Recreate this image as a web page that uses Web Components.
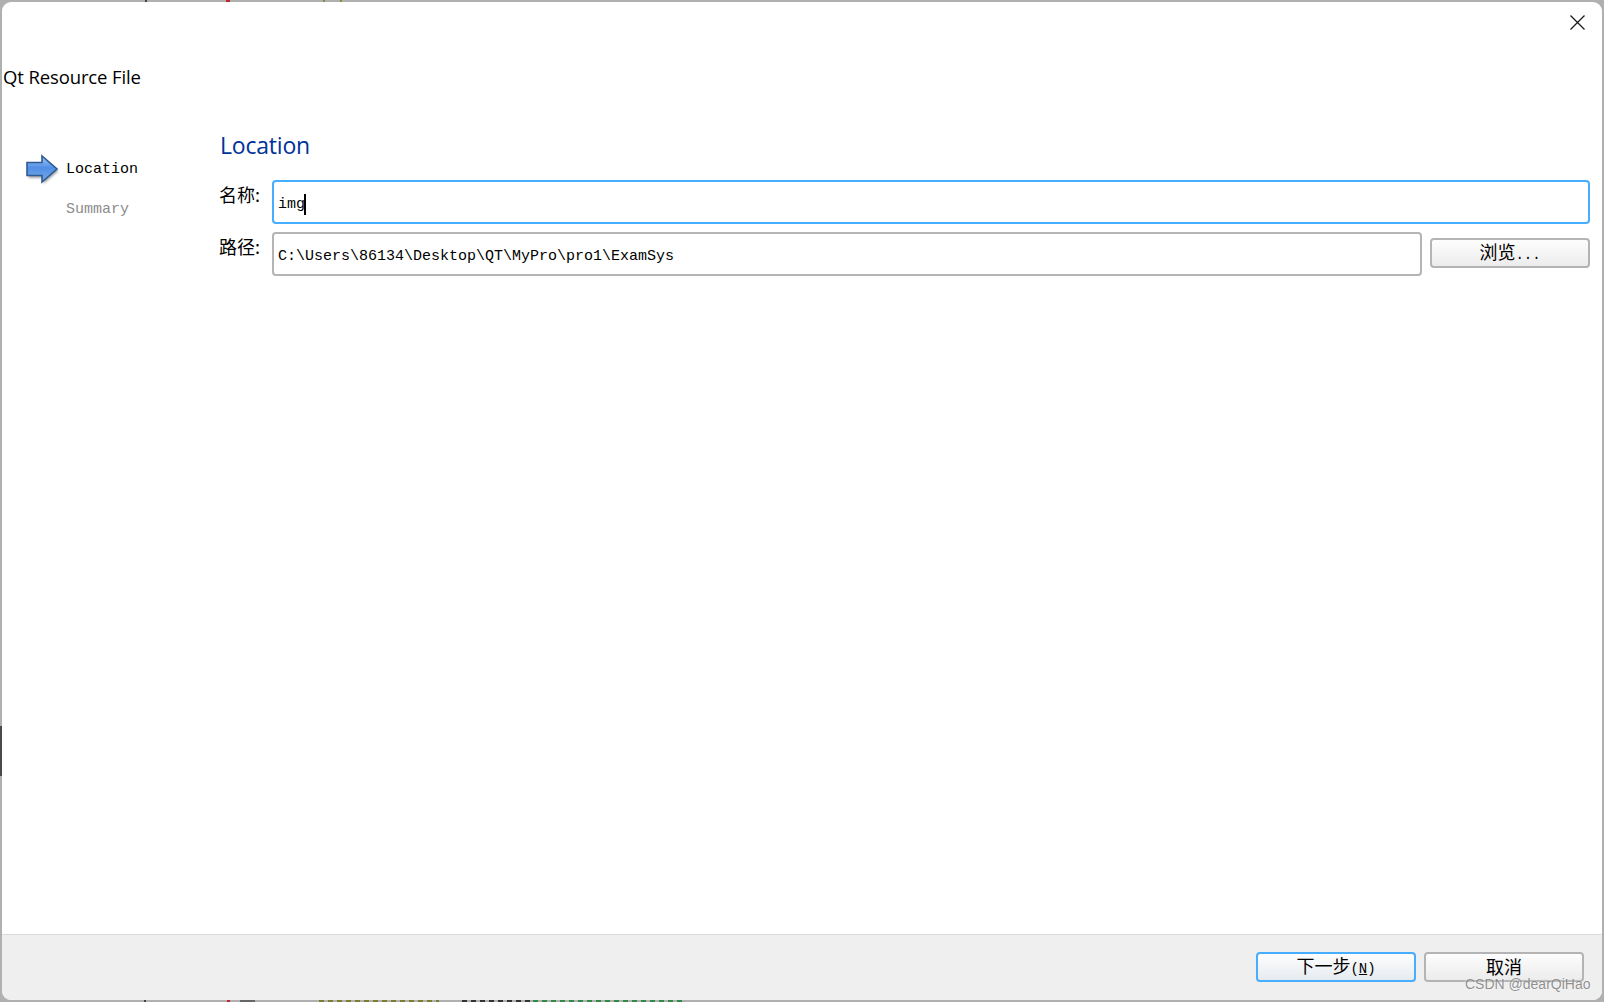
<!DOCTYPE html>
<html>
<head>
<meta charset="utf-8">
<title>Qt Resource File</title>
<style>
	html, body { margin: 0; height: 100%; }
	body { background: #b0b0b0; overflow: hidden; position: relative; }
	.mark { position: absolute; display: block; height: 2px; }
	.dots { background-size: 9px 2px; background-repeat: repeat-x; }
</style>
</head>
<body>
<!-- bits of the window behind the dialog, showing in the 2px frame -->
<i class="mark" style="left:145px;top:0;width:2px;background:#444"></i>
<i class="mark" style="left:226px;top:0;width:4px;background:#c0272d"></i>
<i class="mark" style="left:323px;top:0;width:2px;background:#8b8b3a"></i>
<i class="mark" style="left:340px;top:0;width:2px;background:#8b8b3a"></i>
<i class="mark" style="left:0;top:726px;width:2px;height:50px;background:#4a4a4a"></i>
<i class="mark" style="left:144px;top:1000px;width:2px;background:#444"></i>
<i class="mark" style="left:227px;top:1000px;width:3px;background:#c0272d"></i>
<i class="mark" style="left:240px;top:1000px;width:15px;background:#666"></i>
<i class="mark dots" style="left:319px;top:1000px;width:120px;background-image:linear-gradient(90deg,#7d7d2e 60%,transparent 60%)"></i>
<i class="mark dots" style="left:462px;top:1000px;width:70px;background-image:linear-gradient(90deg,#333 60%,transparent 60%)"></i>
<i class="mark dots" style="left:533px;top:1000px;width:150px;background-image:linear-gradient(90deg,#2f8a45 60%,transparent 60%)"></i>

<wizard-dialog heading="Qt Resource File">
	<wizard-steps slot="steps">
		<wizard-step active>Location</wizard-step>
		<wizard-step>Summary</wizard-step>
	</wizard-steps>
	<location-page></location-page>
	<push-button slot="footer" accent>下一步<latin-text>(<u>N</u>)</latin-text></push-button>
	<push-button slot="footer">取消</push-button>
</wizard-dialog>
<water-mark>CSDN @dearQiHao</water-mark>

<script>
const MONO = '"Liberation Mono", "Noto Sans CJK SC", monospace';

class WizardDialog extends HTMLElement {
	constructor() {
		super();
		this.attachShadow({ mode: "open" });
		this.shadowRoot.innerHTML = `
			<style>
				:host {
					display: flex; flex-direction: column; box-sizing: border-box;
					position: absolute; inset: 2px;
					background: #fff; border-radius: 9px; overflow: hidden;
					color: #000;
				}
				.top { height: 108px; box-sizing: border-box; flex: none; }
				.close { display: flex; justify-content: flex-end; padding: 13px 17px 0 0; height: 15px; }
				h1 {
					margin: 35px 0 0 1px; font: 400 18.5px/24px "Open Sans", sans-serif;
					letter-spacing: -0.12px;
				}
				.main { flex: 1; display: flex; min-height: 0; }
				.side { width: 217px; flex: none; }
				.page { flex: 1; padding-right: 12px; min-width: 0; }
				footer {
					flex: none; height: 66px; box-sizing: border-box;
					background: #efefef; border-top: 1px solid #dcdcdc;
					display: flex; justify-content: flex-end; gap: 8px;
					padding: 17px 18px 0 0;
				}
			</style>
			<div class="top">
				<div class="close">
					<svg width="15" height="15" viewBox="0 0 15 15"><path d="M.5.5l14 14M14.5.5l-14 14" stroke="#1a1a1a" stroke-width="1.3" fill="none"/></svg>
				</div>
				<h1>${this.getAttribute("heading")}</h1>
			</div>
			<div class="main">
				<div class="side"><slot name="steps"></slot></div>
				<div class="page"><slot></slot></div>
			</div>
			<footer><slot name="footer"></slot></footer>
		`;
	}
}

class WizardSteps extends HTMLElement {
	constructor() {
		super();
		this.attachShadow({ mode: "open" });
		this.shadowRoot.innerHTML = `
			<style>
				:host { display: flex; flex-direction: column; padding: 40px 0 0 24px; }
			</style>
			<slot></slot>
		`;
	}
}

class WizardStep extends HTMLElement {
	constructor() {
		super();
		this.attachShadow({ mode: "open" });
		const active = this.hasAttribute("active");
		this.shadowRoot.innerHTML = `
			<style>
				:host {
					display: flex; align-items: center; height: 40px;
					font: 15px/20px ${MONO};
					color: ${active ? "#000" : "#8c8c8c"};
				}
				.icon { width: 40px; flex: none; display: flex; }
			</style>
			<span class="icon">${active ? `
				<svg width="36" height="32" viewBox="0 0 36 32">
					<defs>
						<linearGradient id="arrow" x1="0" y1="0" x2="0" y2="1">
							<stop offset="0" stop-color="#a9c9f2"/>
							<stop offset="0.45" stop-color="#4f8fe6"/>
							<stop offset="1" stop-color="#7ea9e4"/>
						</linearGradient>
						<filter id="soft" x="-20%" y="-20%" width="140%" height="140%"><feGaussianBlur stdDeviation="1.3"/></filter>
					</defs>
					<path d="M1 9H16V2L31 15 16 28V22H1z" fill="#000" opacity=".35" filter="url(#soft)" transform="translate(1.500 2)"/>
					<path d="M1 8.500H16V2L31 15 16 28V21.500H1z" fill="url(#arrow)" stroke="#2c5a92" stroke-width="1.600"/>
				</svg>` : ""}</span>
			<span><slot></slot></span>
		`;
	}
}

class LocationPage extends HTMLElement {
	constructor() {
		super();
		this.attachShadow({ mode: "open" });
		this.shadowRoot.innerHTML = `
			<style>
				:host { display: block; }
				h2 {
					margin: 20px 0 0 1px; font: 400 23px/30px "Open Sans", sans-serif;
					color: #003399; letter-spacing: -0.2px;
				}
				.form {
					display: grid; grid-template-columns: 53px 1fr 160px;
					row-gap: 8px; margin-top: 20px;
				}
				label {
					font: 18px/24px "Noto Sans CJK SC", sans-serif;
					padding-top: 2px;
				}
				.wide { grid-column: 2 / 4; }
				.row { grid-column: 2 / 4; display: flex; gap: 8px; align-items: flex-start; }
				.row line-field { flex: 1; }
				.row push-button { width: 160px; margin-top: 6px; }
			</style>
			<h2>Location</h2>
			<div class="form">
				<label>名称:</label>
				<line-field class="wide" focused>img</line-field>
				<label>路径:</label>
				<div class="row">
					<line-field>C:\\Users\\86134\\Desktop\\QT\\MyPro\\pro1\\ExamSys</line-field>
					<push-button>浏览<latin-text>...</latin-text></push-button>
				</div>
			</div>
		`;
	}
}

class LineField extends HTMLElement {
	constructor() {
		super();
		this.attachShadow({ mode: "open" });
		const focused = this.hasAttribute("focused");
		this.shadowRoot.innerHTML = `
			<style>
				:host {
					display: flex; align-items: center; box-sizing: border-box;
					height: 44px; padding: 5px 0 0 4px;
					background: #fff; border-radius: 4px;
					border: 2px solid ${focused ? "#47adff" : "#b4b4b4"};
					font: 15px/20px ${MONO};
				}
				.caret { width: 2px; height: 21px; background: #000; margin-left: -1px; }
			</style>
			<slot></slot>${focused ? `<span class="caret"></span>` : ""}
		`;
	}
}

class PushButton extends HTMLElement {
	constructor() {
		super();
		this.attachShadow({ mode: "open" });
		const accent = this.hasAttribute("accent");
		this.shadowRoot.innerHTML = `
			<style>
				:host {
					display: flex; align-items: center; justify-content: center;
					box-sizing: border-box; width: 160px; height: 30px;
					padding-bottom: 2px;
					border-radius: 4px;
					border: 2px solid ${accent ? "#47adff" : "#b4b4b4"};
					background: linear-gradient(#fdfdfd, ${accent ? "#e6ebf0" : "#ececec"});
					font: 18px/22px "Noto Sans CJK SC", sans-serif;
				}
			</style>
			<span><slot></slot></span>
		`;
	}
}

// the latin part of a button caption, set smaller than the chinese
class LatinText extends HTMLElement {
	constructor() {
		super();
		this.attachShadow({ mode: "open" });
		this.shadowRoot.innerHTML = `<style>:host { display: inline; font: 14px/20px "Liberation Mono", monospace; }</style><slot></slot>`;
	}
}

class WaterMark extends HTMLElement {
	constructor() {
		super();
		this.attachShadow({ mode: "open" });
		this.shadowRoot.innerHTML = `
			<style>
				:host {
					position: absolute; left: 1465px; top: 974px;
					font: 14px/20px "Liberation Sans", sans-serif;
					color: rgba(110,110,110,.75);
					text-shadow: 0 0 2px rgba(255,255,255,.8);
				}
			</style>
			<slot></slot>
		`;
	}
}

customElements.define("wizard-dialog", WizardDialog);
customElements.define("wizard-steps", WizardSteps);
customElements.define("wizard-step", WizardStep);
customElements.define("location-page", LocationPage);
customElements.define("line-field", LineField);
customElements.define("push-button", PushButton);
customElements.define("latin-text", LatinText);
customElements.define("water-mark", WaterMark);
</script>
</body>
</html>
